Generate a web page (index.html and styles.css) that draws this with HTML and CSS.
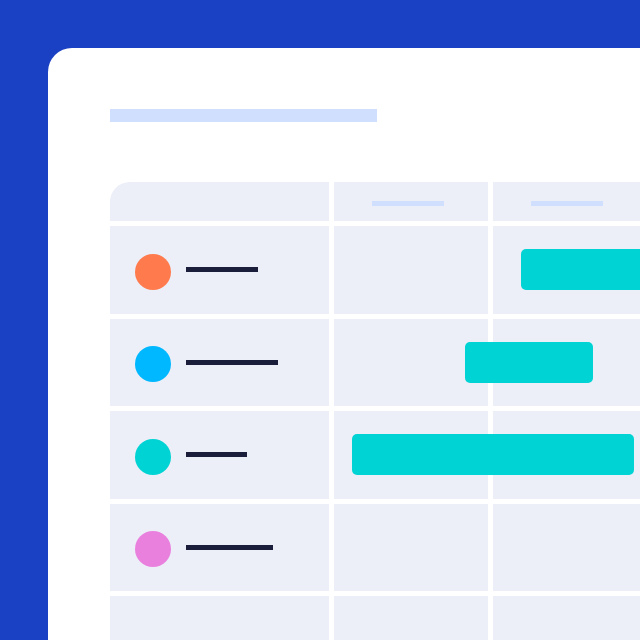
FILE: index.html
```html
<!DOCTYPE html>
<html lang="en">

<head>
    <meta charset="UTF-8">
    <meta name="viewport" content="width=device-width, initial-scale=1.0">
    <title>Schedule</title>
    <link rel="stylesheet" href="styles.css">
</head>

<body>
    <div class="screen">
        <div class="panel">
            <div class="panel-title"></div>

            <div class="schedule">
                <!-- header -->
                <div class="row head">
                    <div class="cell first"></div>
                    <div class="cell"><span class="head-line"></span></div>
                    <div class="cell"><span class="head-line"></span></div>
                    <div class="cell"></div>
                </div>

                <div class="row">
                    <div class="cell name"><span class="dot orange"></span><span class="name-line" style="width: 72px"></span></div>
                    <div class="cell"></div>
                    <div class="cell"></div>
                    <div class="cell"></div>
                    <div class="bar" style="left: 411px; width: 200px"></div>
                </div>

                <div class="row">
                    <div class="cell name"><span class="dot blue"></span><span class="name-line" style="width: 92px"></span></div>
                    <div class="cell"></div>
                    <div class="cell"></div>
                    <div class="cell"></div>
                    <div class="bar" style="left: 355px; width: 128px"></div>
                </div>

                <div class="row">
                    <div class="cell name"><span class="dot teal"></span><span class="name-line" style="width: 61px"></span></div>
                    <div class="cell"></div>
                    <div class="cell"></div>
                    <div class="cell"></div>
                    <div class="bar" style="left: 242px; width: 282px"></div>
                </div>

                <div class="row">
                    <div class="cell name"><span class="dot pink"></span><span class="name-line" style="width: 87px"></span></div>
                    <div class="cell"></div>
                    <div class="cell"></div>
                    <div class="cell"></div>
                </div>

                <div class="row">
                    <div class="cell name"></div>
                    <div class="cell"></div>
                    <div class="cell"></div>
                    <div class="cell"></div>
                </div>
            </div>
        </div>
    </div>
</body>

</html>
```

FILE: styles.css
```css
body {
    margin: 0;
    font-family: "Liberation Sans", Arial, sans-serif;
}

.screen {
    width: 640px;
    height: 640px;
    overflow: hidden;
    background: #1a40c4;
    padding: 48px 0 0 48px;
    box-sizing: border-box;
}

.panel {
    width: 700px;
    height: 700px;
    background: #fff;
    border-top-left-radius: 24px;
    padding: 61px 0 0 62px;
    box-sizing: border-box;
}

.panel-title {
    width: 267px;
    height: 13px;
    background: #cfdffd;
}

.schedule {
    margin-top: 60px;
    display: flex;
    flex-direction: column;
    gap: 5px;
    width: 700px;
}

.row {
    position: relative;
    display: grid;
    grid-template-columns: 219px 154px 154px 154px;
    column-gap: 5px;
    height: 87.5px;
}

.row.head {
    height: 39px;
}

.cell {
    background: #eceef8;
}

.cell.first {
    border-top-left-radius: 20px;
}

.head .cell {
    padding: 19px 0 0 38px;
    box-sizing: border-box;
}

.head-line {
    display: block;
    width: 72px;
    height: 5px;
    background: #cfdffd;
}

.name {
    display: flex;
    align-items: center;
    gap: 15px;
    padding-left: 25px;
}

.dot {
    width: 36px;
    height: 36px;
    border-radius: 50%;
    margin-top: 4px;
    flex-shrink: 0;
}

.orange { background: #ff7b4d; }
.blue { background: #00b8ff; }
.teal { background: #00d3d3; }
.pink { background: #ea80de; }

.name-line {
    height: 5px;
    background: #1b1e3a;
}

/* task bars sit over the day cells */
.bar {
    position: absolute;
    top: 23px;
    height: 41px;
    border-radius: 5px;
    background: #00d3d3;
}
```
